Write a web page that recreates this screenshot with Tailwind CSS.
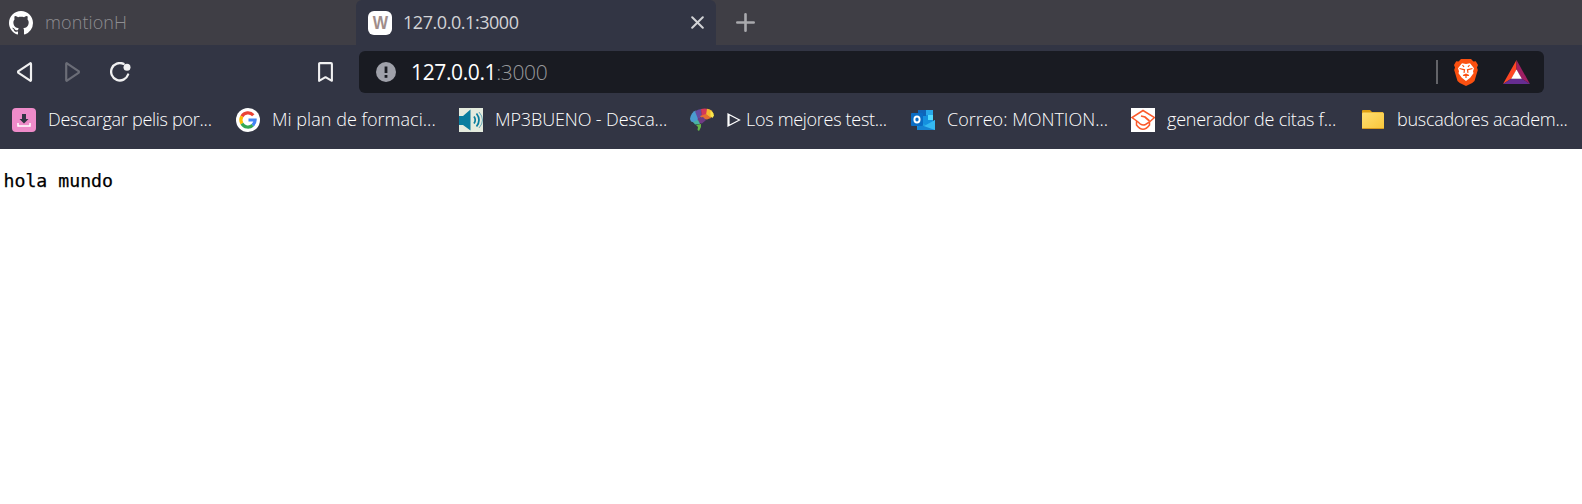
<!DOCTYPE html>
<html lang="es">
<head>
<meta charset="utf-8">
<title>127.0.0.1:3000</title>
<script src="https://cdn.jsdelivr.net/npm/@tailwindcss/browser@4"></script>
</head>
<body class="bg-white font-['Open_Sans',sans-serif] w-[1582px] h-[504px] overflow-hidden">
<header class="bg-[#323544] h-[149px]">
  <div class="flex h-[45px] bg-[#3f3e45]">
    <div class="w-[356px] flex items-center pl-[9px] gap-3">
      <svg class="size-6 shrink-0" viewBox="0 0 16 16" fill="#fff"><path d="M8 0C3.58 0 0 3.58 0 8c0 3.54 2.29 6.53 5.47 7.59.4.07.55-.17.55-.38 0-.19-.01-.82-.01-1.49-2.01.37-2.53-.49-2.69-.94-.09-.23-.48-.94-.82-1.13-.28-.15-.68-.52-.01-.53.63-.01 1.08.58 1.23.82.72 1.21 1.87.87 2.33.66.07-.52.28-.87.51-1.07-1.78-.2-3.64-.89-3.64-3.95 0-.87.31-1.59.82-2.15-.08-.2-.36-1.02.08-2.12 0 0 .67-.21 2.2.82.64-.18 1.32-.27 2-.27s1.36.09 2 .27c1.53-1.04 2.2-.82 2.2-.82.44 1.1.16 1.92.08 2.12.51.56.82 1.27.82 2.15 0 3.07-1.87 3.75-3.65 3.95.29.25.54.73.54 1.48 0 1.07-.01 1.93-.01 2.2 0 .21.15.46.55.38A8.01 8.01 0 0 0 16 8c0-4.42-3.58-8-8-8z"/></svg>
      <span class="pb-0.5 text-[18px] leading-6 font-light text-[#8e8d91] whitespace-nowrap tracking-[0.1px]">montionH</span>
    </div>
    <div class="w-[360px] flex items-center pl-3 pr-3 bg-[#323544] rounded-t-md">
      <div class="size-6 rounded-md bg-white flex items-center justify-center shrink-0 text-[18px] leading-6 font-bold text-[#a08d8b] font-['Liberation_Sans',sans-serif]"><span class="scale-x-90">W</span></div>
      <span class="ml-[11px] pb-0.5 text-[18px] leading-6 text-[#d2d3d6] whitespace-nowrap tracking-[-0.45px]">127.0.0.1:3000</span>
      <svg class="ml-auto size-[13px]" viewBox="0 0 13 13" fill="none" stroke="#d2d3d6" stroke-width="2" stroke-linecap="round"><path d="M1.2 1.2l10.6 10.6M11.8 1.2L1.2 11.8"/></svg>
    </div>
    <div class="flex items-center pl-5">
      <svg class="size-[19px]" viewBox="0 0 19 19" fill="none" stroke="#a9a9ad" stroke-width="2.6" stroke-linecap="round"><path d="M9.5 1.3v16.4M1.3 9.5h16.4"/></svg>
    </div>
  </div>

  <div class="flex h-[54px] items-center pl-[17px]">
    <svg class="w-[16px] h-5" viewBox="0 0 16 20" fill="none" stroke="#f0f0f1" stroke-width="2.2" stroke-linejoin="round"><path d="M13.2 1.3Q14 1 14 2V18Q14 19 13.2 18.7L1.500 10.900Q.7 10 1.500 9.100Z"/></svg>
    <svg class="ml-8 w-[16px] h-5" viewBox="0 0 16 20" fill="none" stroke="#6b6d77" stroke-width="2.2" stroke-linejoin="round"><path d="M2 1.3Q1.200 1 1.200 2V18Q1.200 19 2 18.700L13.500 10.900Q14.300 10 13.500 9.100Z"/></svg>
    <svg class="ml-[29px] w-[21px] h-5" viewBox="0 0 21 20" fill="none" stroke="#f0f0f1" stroke-width="2.3" stroke-linecap="round"><path d="M13.6 1.9A8.7 8.7 0 1 0 18.1 12.5"/><circle cx="17" cy="5.2" r="3.5" fill="#f0f0f1" stroke="none"/></svg>
    <svg class="ml-[187px] w-[15px] h-5" viewBox="0 0 15 20" fill="none" stroke="#f0f0f1" stroke-width="2.1" stroke-linejoin="round"><path d="M2 1.100H13Q13.900 1.100 13.900 2V18.8L7.5 15.2 1.100 18.8V2Q1.100 1.100 2 1.100Z"/></svg>
    <div class="ml-[26px] w-[1185px] h-[42px] rounded-md bg-[#191b22] flex items-center pl-[17px] pr-3.5">
      <svg class="size-5 shrink-0" viewBox="0 0 20 20"><circle cx="10" cy="10" r="10" fill="#9fa1aa"/><path d="M10 4.5v6.5" stroke="#191b22" stroke-width="2.8"/><path d="M10 13v2.8" stroke="#191b22" stroke-width="2.8"/></svg>
      <span class="ml-[15px] text-[21px] leading-7 text-white whitespace-nowrap tracking-[-0.38px]">127.0.0.1<span class="font-light text-[#98999c]">:3000</span></span>
      <div class="ml-auto w-0.5 h-6 bg-[#636469]"></div>
      <svg class="ml-4 w-6 h-[27px]" viewBox="0 0 24 27"><path d="M7 0h10l2.5 2.5 2.3-.2L24 6l-1 2.5.8 2.5-3.3 11-2.3 2L12 27l-6.2-3-2.3-2L.2 11 1 8.500 0 6l2.200-3.700 2.300.2Z" fill="#fb5010"/><path d="M8 4.300l4 .8 4-.8 4 4.900-1 3 .5 2-3.300 4.500L12 22 7.800 18.700 4.500 14.200l.5-2-1-3Z" fill="#fff"/><path d="M5.500 9.500l5 1.300-.5 3M18.500 9.500l-5 1.300.5 3M9 16.500l3-1.300 3 1.300M12 15v4M8.500 6l1.500 2M15.500 6L14 8" fill="none" stroke="#fb5010" stroke-width="1.200"/></svg>
      <svg class="ml-[25px] w-[27px] h-6" viewBox="0 0 27 24"><path d="M13.500 0L0 24l8.500-5.500L13.500 10Z" fill="#ff4724"/><path d="M13.500 0L27 24l-8.500-5.500L13.500 10Z" fill="#9e1f63"/><path d="M0 24h27l-8.500-5.500h-10Z" fill="#662d91"/><path d="M13.500 9.500l5.300 9.300H8.200Z" fill="#fff"/></svg>
    </div>
  </div>

  <nav class="flex h-[42px] pl-3 items-center text-[18px] leading-6 font-light text-white whitespace-nowrap">
    <a class="w-[224px] flex items-center gap-3 shrink-0">
      <svg class="size-6 shrink-0" viewBox="0 0 24 24"><rect width="24" height="24" rx="4" fill="#ee8bc9"/><path d="M10 6h4v5h2.500L12 15.500 7.500 11H10Z" fill="#323544"/><path d="M6 15v3h12v-3" fill="none" stroke="#fff" stroke-width="1.500"/></svg>
      <span class="pb-0.5 tracking-[-0.27px]">Descargar pelis por...</span>
    </a>
    <a class="w-[223px] flex items-center gap-3 shrink-0">
      <svg class="size-6 shrink-0" viewBox="0 0 24 24" fill="none" stroke-width="3.200"><circle cx="12" cy="12" r="12" fill="#fff"/><path d="M5.900 8.400A7.100 7.100 0 0 1 17.300 7.200" stroke="#ea4335"/><path d="M5.900 15.600A7.100 7.100 0 0 1 5.900 8.400" stroke="#fbbc05"/><path d="M16.700 17.300A7.100 7.100 0 0 1 5.900 15.600" stroke="#34a853"/><path d="M12.500 12H19.100Q19.100 15.200 16.700 17.300" stroke="#4285f4"/></svg>
      <span class="pb-0.5 tracking-[0.03px]">Mi plan de formaci...</span>
    </a>
    <a class="w-[231px] flex items-center gap-3 shrink-0">
      <svg class="size-6 shrink-0" viewBox="0 0 24 24"><path d="M0 0h24v24H0Z" fill="#e4ebde"/><path d="M0 8h4l7.500-6.500v21L4 17H0Z" fill="#087d9f"/><path d="M15 8.500q2.500 3.500 0 7M17.500 5.500q5 6.500 0 13" fill="none" stroke="#087d9f" stroke-width="1.700"/><path d="M20 4q3.500 4 3.500 8T20 20" fill="none" stroke="#6aa9b8" stroke-width="1"/></svg>
      <span class="pb-0.5 tracking-[-0.12px]">MP3BUENO - Desca...</span>
    </a>
    <a class="w-[221px] flex items-center gap-3 shrink-0">
      <svg class="size-6 shrink-0" viewBox="0 0 24 24"><path d="M0 11Q1 4 6 2.500l5 5.500-2 5-5 1.500-3-1Z" fill="#4b9bd0"/><path d="M5 3.500Q8 1 11 1l1 7-4 3Z" fill="#654a9f"/><path d="M11 1q3-.7 6-.2l1 6-6 4Z" fill="#d43758"/><path d="M17 .8q5 .7 6.500 5L21 10l-5-3Z" fill="#f4b72e"/><path d="M20.500 2.500q3 2 3.500 5l-1.500 2.500-2-2Z" fill="#fbe84c"/><path d="M10 8l6-2 5 4-4 1.500-5-.5Z" fill="#e56d32"/><path d="M8 10l5-1 3 3-4 3.500-5-.5Z" fill="#703b84"/><path d="M3 14l5-2 2 4-5 .5Z" fill="#49b3a2"/><path d="M6 17l5-1v3l-2 4-1.500-1 .5-3Z" fill="#65b848"/></svg>
      <span class="flex items-center gap-[5px]"><svg class="w-[14px] h-[14px] ml-px" viewBox="0 0 14 14" fill="none" stroke="#fff" stroke-width="1.200"><path d="M1 1v12l11.500-6ZM2 1v12"/></svg><span class="pb-0.5 tracking-[-0.3px]">Los mejores test...</span></span>
    </a>
    <a class="w-[220px] flex items-center gap-3 shrink-0">
      <svg class="size-6 shrink-0" viewBox="0 0 24 24"><path d="M7 2h15v15H7Z" fill="#1490df"/><path d="M7 2h8v6H7Z" fill="#0f64b8"/><path d="M15 2h7v5h-7Z" fill="#28a8ea"/><path d="M17 7h5v5h-5Z" fill="#50d9ff"/><path d="M6 12l9 5 9-5v10H6Z" fill="#1b9de2"/><path d="M6 22L24 12v10Z" fill="#35b8f1"/><path d="M7 16l17 6H6Z" fill="#1583d3"/><rect y="5" width="12" height="13" rx="1" fill="#0a6cc4"/><ellipse cx="6" cy="11.500" rx="2.600" ry="3" fill="none" stroke="#fff" stroke-width="1.900"/></svg>
      <span class="pb-0.5 tracking-[0px]">Correo: MONTION...</span>
    </a>
    <a class="w-[230px] flex items-center gap-3 shrink-0">
      <svg class="size-6 shrink-0" viewBox="0 0 24 24" fill="none" stroke="#fb5a2c" stroke-width="1.500"><path d="M0 0h24v24H0Z" fill="#fff" stroke="none"/><path d="M6.500 13.500L1 9.500 12 2.500l11.500 7-5 4.500-4 2.500q-2.500 1.300-5-.3ZM5.500 13v4q6.500 8.500 13 0v-3"/><path d="M10 8l4 1 4.500 4" stroke-width="1.800"/></svg>
      <span class="pb-0.5 tracking-[-0.22px]">generador de citas f...</span>
    </a>
    <a class="flex items-center gap-3 shrink-0">
      <svg class="size-6 shrink-0" viewBox="0 0 24 24"><defs><linearGradient id="fold" x1="0" y1="0" x2="1" y2="1"><stop stop-color="#ffdf72"/><stop offset="1" stop-color="#f8c63a"/></linearGradient></defs><path d="M1 3Q1 2 2 2h7l2 2h11v6H1Z" fill="#dfa012"/><rect x="1" y="4.500" width="22" height="16.500" rx="1.200" fill="url(#fold)"/><path d="M1.500 20.500h21" stroke="#d79a20" stroke-width="1"/></svg>
      <span class="pb-0.5 tracking-[-0.28px]">buscadores academ...</span>
    </a>
  </nav>
</header>
<main>
  <pre class="pt-[20px] pl-[3.500px] text-[18.200px] leading-6 text-black font-['DejaVu_Sans_Mono',monospace] [-webkit-text-stroke:0.250px_black]">hola mundo</pre>
</main>
</body>
</html>
